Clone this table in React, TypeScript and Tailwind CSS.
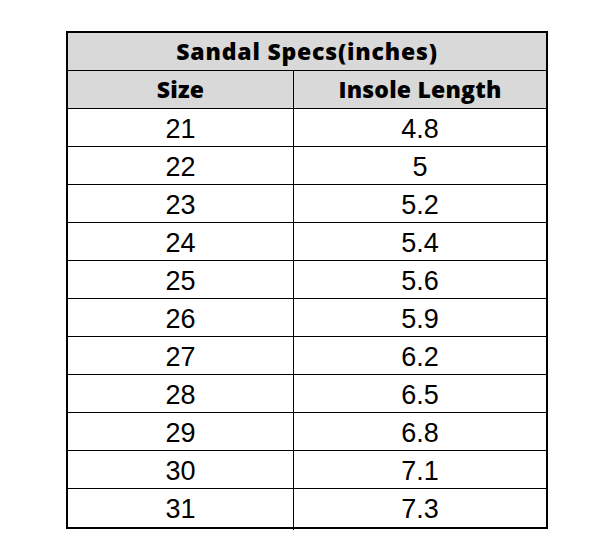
const rows: [string, string][] = [
  ['21', '4.8'],
  ['22', '5'],
  ['23', '5.2'],
  ['24', '5.4'],
  ['25', '5.6'],
  ['26', '5.9'],
  ['27', '6.2'],
  ['28', '6.5'],
  ['29', '6.8'],
  ['30', '7.1'],
  ['31', '7.3'],
];

export default function App() {
  return (
    <div className="w-[602px] h-[552px] bg-white pt-[31px] pl-[66px]">
      <div className="w-[482px] border-2 border-black text-black">
        <div className="h-[38px] flex items-center justify-center bg-[#d9d9d9] border-b border-black text-[23px] font-extrabold tracking-[0.8px] font-['Open_Sans',Lato,sans-serif]">
          Sandal Specs(inches)
        </div>
        <div className="h-[38px] grid grid-cols-[226px_1fr] bg-[#d9d9d9] border-b border-black text-[23px] font-extrabold tracking-[0.2px] font-['Open_Sans',Lato,sans-serif]">
          <div className="flex items-center justify-center border-r border-black">Size</div>
          <div className="flex items-center justify-center">Insole Length</div>
        </div>
        {rows.map(([size, len], i) => (
          <div
            key={size}
            className={`h-[38px] grid grid-cols-[226px_1fr] text-[27px] font-['Liberation_Sans',Arial,sans-serif] ${
              i < rows.length - 1 ? 'border-b border-black' : ''
            }`}
          >
            <div className="flex items-center justify-center border-r border-black">{size}</div>
            <div className="flex items-center justify-center">{len}</div>
          </div>
        ))}
      </div>
    </div>
  );
}
